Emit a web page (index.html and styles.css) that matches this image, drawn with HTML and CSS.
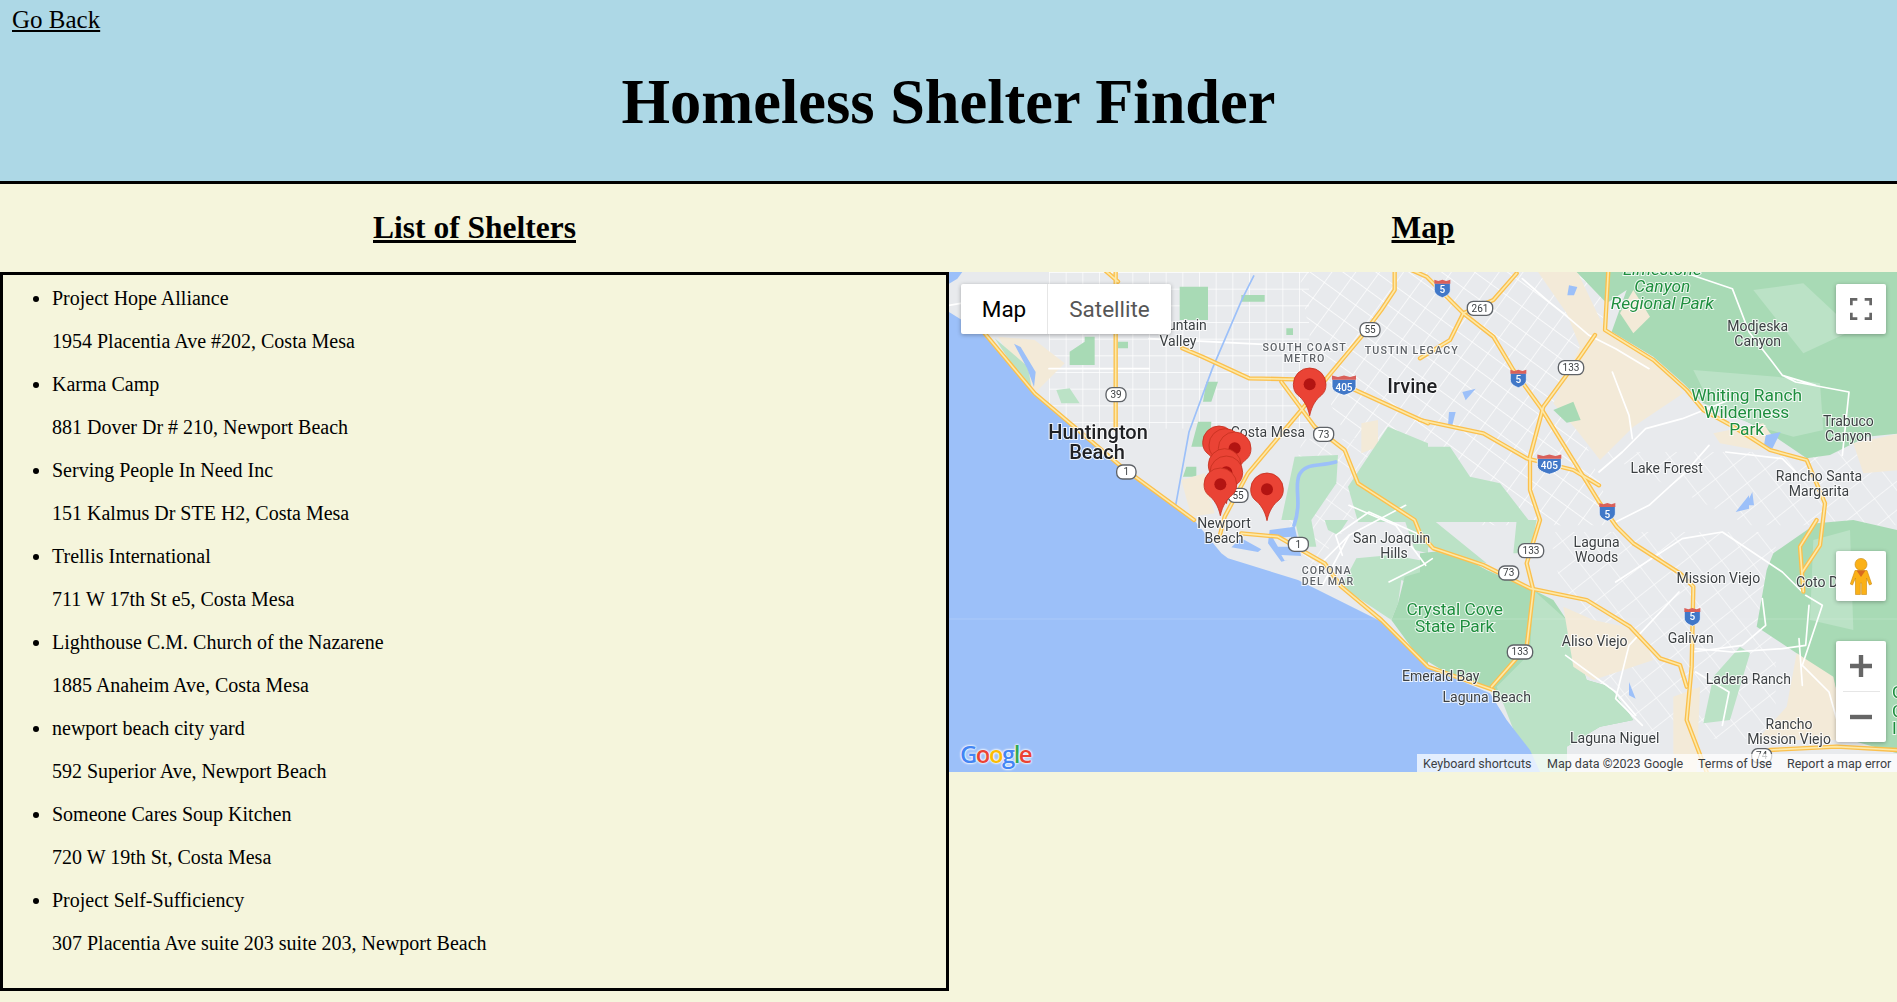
FILE: index.html
```html
<!DOCTYPE html>
<html lang="en">
<head>
<meta charset="utf-8">
<title>Homeless Shelter Finder</title>
<link rel="stylesheet" href="styles.css">
</head>
<body>
<header class="site-header">
  <a class="back-link" href="#">Go Back</a>
  <h1 class="title">Homeless Shelter Finder</h1>
</header>
<main class="columns">
  <section class="col">
    <h2 class="col-title">List of Shelters</h2>
    <div class="list-box">
      <ul class="shelters">
        <li><p>Project Hope Alliance</p><p>1954 Placentia Ave #202, Costa Mesa</p></li>
        <li><p>Karma Camp</p><p>881 Dover Dr # 210, Newport Beach</p></li>
        <li><p>Serving People In Need Inc</p><p>151 Kalmus Dr STE H2, Costa Mesa</p></li>
        <li><p>Trellis International</p><p>711 W 17th St e5, Costa Mesa</p></li>
        <li><p>Lighthouse C.M. Church of the Nazarene</p><p>1885 Anaheim Ave, Costa Mesa</p></li>
        <li><p>newport beach city yard</p><p>592 Superior Ave, Newport Beach</p></li>
        <li><p>Someone Cares Soup Kitchen</p><p>720 W 19th St, Costa Mesa</p></li>
        <li><p>Project Self-Sufficiency</p><p>307 Placentia Ave suite 203 suite 203, Newport Beach</p></li>
      </ul>
    </div>
  </section>
  <section class="col">
    <h2 class="col-title">Map</h2>
    <div class="map">
      <svg class="map-art" viewBox="0 0 2844 1500" aria-hidden="true">
        <defs>
          <pattern id="gridA" width="50" height="50" patternUnits="userSpaceOnUse"><path class="gridline" d="M0 0H50M0 0V50"/></pattern>
          <pattern id="gridB" width="58" height="58" patternUnits="userSpaceOnUse" patternTransform="rotate(36)"><path class="gridline" d="M0 0H58M0 0V58"/></pattern>
          <pattern id="gridC" width="68" height="68" patternUnits="userSpaceOnUse" patternTransform="rotate(-38)"><path class="gridline" d="M0 0H68M0 0V68"/></pattern>
          <g id="pin"><path class="pin-body" d="M0 0C-6-30-20-50-36-62C-45-70-49-80-49-94A49 49 0 1 1 49-94C49-80 45-70 36-62C20-50 6-30 0 0Z"/><circle class="pin-dot" cx="0" cy="-94" r="18"/></g>
          <g id="i-shield"><path class="i-blue" d="M-24-16H24V4C24 18 10 24 0 28C-10 24-24 18-24 4Z"/><path class="i-red" d="M-24-26L-12-22L0-26L12-22L24-26V-14H-24Z"/></g>
          <g id="fw">
            <path d="M700 229L760 254L900 319L1040 322M1197 344L1437 454"/>
            <path d="M1413 444L1603 484L1733 559L1873 594L1950 640"/>
            <path d="M1337-6V54L1297 114L1237 194L1137 314L1057 414L897 604L827 734L810 800"/>
            <path d="M997 329L1097 464L1187 534L1227 634L1397 744L1413 784L1453 829L1603 879L1743 949L1913 984L2043 1064L2133 1159L2193 1179L2213 1244"/>
            <path d="M107 184L257 364L517 584L735 744M877 784L987 794L1127 874L1177 944L1297 1044L1437 1184L1633 1254"/>
            <path d="M500-6V474M467-6L507 29"/>
            <path d="M1387-6L1433 14L1543 124L1633 194L1693 294L1773 404L1953 694L2003 764L2053 814L2193 904L2233 944L2228 1184L2213 1344L2273 1500"/>
            <path d="M1703 4L1633 84L1543 124L1503 204L1413 259"/>
            <path d="M1978-6L1968 174L2113 264L2213 354L2263 414L2353 464L2463 534L2573 564L2628 694L2613 820L2560 900"/>
            <path d="M1938 189L1893 254L1783 404L1743 554L1743 654L1773 744L1733 874L1753 954L1733 1124L1628 1244"/>
            <path d="M2603 744L2553 824L2563 959"/>
            <path d="M2463 1434L2663 1424L2844 1434"/>
          </g>
          <g id="streets">
            <path d="M0 100L230 60L500 70M300 290L600 290M600 200L1000 220M1200 700L1340 760L1430 880M1090 900L1200 790L1370 700"/>
            <path d="M1720 20L1800 90L1850 130M1850 130L1920 190L2000 230L2100 290M2230 10L2350 50L2400 180L2470 270L2500 310L2600 340M2500 310L2540 330L2700 360L2680 550M2350 380L2200 440L2090 470L2020 540L1950 600"/>
            <path d="M1990 300L2040 430L2050 500M2280 520L2210 600L2100 700L2000 750M2330 540L2500 560L2560 620"/>
            <path d="M2000 930L2200 800L2320 780L2500 900L2560 960M2440 980L2450 1060L2380 1120L2230 1140M2240 1130L2350 1140L2500 1130L2570 1120L2580 1000M2190 960L2040 1120L2000 1280L2080 1360M1850 1150L2000 1260L2060 1330M2560 1240L2550 1100M2240 1200L2340 1260L2320 1360M2570 970L2620 1000L2580 1120L2560 1180L2640 1260L2680 1400"/>
            <path d="M1180 850L1160 790L1260 720L1440 800M1200 790L1120 940M1320 930L1420 880L1450 860"/>
          </g>
        </defs>

        <!-- street grids -->
        <rect x="300" y="0" width="780" height="470" fill="url(#gridA)"/>
        <path d="M1050 0H2000L1880 430L2000 760H1560L1180 470L1100 300Z" fill="url(#gridB)"/>
        <path d="M1800 780H2480V1400H2100L1880 1150Z" fill="url(#gridC)" class="grid-faint"/>
        <path d="M1950 540H2844V760H2400Z" fill="url(#gridC)" class="grid-faint"/>
        <path d="M1060 500H1300L1250 700L1080 900L1000 760Z" fill="url(#gridB)" class="grid-faint"/>

        <!-- land tones -->
        <g transform="translate(1413,-6)">
          <path class="sand" d="M350 0H470L560 190L700 270L790 370L640 470L540 570L470 480L400 400L480 230L440 130Z"/>
          <path class="park-dark" d="M470 6H1440V490L1340 500L1230 555L1160 565L1050 490L950 440L850 400L790 340L700 260L575 185L620 60L560 100Z"/>
          <path class="park-soft" d="M820 300L1070 320L1200 340L1210 480L1120 500L1050 480L880 420Z"/>
          <path class="park-soft" d="M1000 60L1150 40L1300 180L1150 250Z"/>
          <path class="sand" d="M600 130L640 60L690 140L640 190Z"/>
          <path class="park" d="M0 530L90 530L150 620L240 640L330 756H0Z"/>
          <path class="park-dark" d="M400 420L460 395L482 450L440 458Z"/>
          <path class="sand" d="M880 490L1030 460L1070 520L1010 540L900 520Z"/>
          <path class="sand" d="M1300 520L1440 490V600L1330 610Z"/>
        </g>
        <g transform="translate(-3,-6)">
          <path class="sand" d="M150 200L260 210L350 280L260 370Z"/>
          <path class="park" d="M140 205L240 290L250 350L210 310Z"/>
          <path class="park-dark" d="M695 50H780V150H695ZM365 245L410 215V200H440V285H365ZM880 75H950V95H880ZM510 215H540V235H510ZM1015 175H1035V195H1015ZM750 455H790L785 530H730ZM775 335H810L790 395H765ZM715 590H745V620H705Z"/>
          <path class="sand" d="M700 630L770 610L800 730L730 740Z"/>
          <path class="sand" d="M1240 460L1290 450L1290 530L1240 550Z"/>
          <path class="park" d="M1040 560L1170 555L1165 640L1090 750H1000Z"/>
          <path class="park" d="M1200 650L1320 470L1440 520V756H1230Z"/>
          <path class="park" d="M325 360L365 355L395 400H340Z"/>
        </g>
        <g transform="translate(-3,744)">
          <path class="park" d="M1040 0H1090L1105 80L1060 80Z"/>
          <path class="park" d="M1130 0H1200L1170 45L1140 30Z"/>
          <path class="park" d="M1225 115L1330 105L1440 125V210L1360 180L1350 250L1330 300L1180 200Z"/>
          <path class="park-dark" d="M1330 300L1350 250L1370 170L1440 150V450Z"/>
          <path class="park" d="M1370 0H1440V100L1400 90Z"/>
        </g>
        <g transform="translate(1413,744)">
          <path class="park-dark" d="M0 100L90 90L200 150L340 210L400 240L440 300L500 480L570 500L640 600L540 620L440 680L440 756H350L260 560L210 510L100 470L0 410Z"/>
          <path class="park" d="M340 210L330 400L230 500L330 756H440L440 680L540 620L640 600L570 500L500 480L440 300Z"/>
          <path class="park" d="M0 0H40L200 130L60 100L0 70ZM290 0H350L330 100L280 100Z"/>
          <path class="park-dark" d="M1431 30L1300 0L1190 10L1060 100L1040 150L1010 320L1130 400L1240 480L1290 660L1431 700Z"/>
          <path class="park" d="M1180 60L1290 30L1300 330L1170 300Z"/>
          <path class="park" d="M880 470L960 380L990 400L930 600L850 610Z"/>
          <path class="sand" d="M430 260L520 300L660 330L700 420L520 480L460 440Z"/>
          <path class="sand" d="M760 530L840 500L830 756H760Z"/>
          <path class="sand" d="M1130 400L1240 470L1280 660H1010L1100 560Z"/>
        </g>
        <use href="#streets" class="street-set"/>

        <!-- water -->
        <path class="water" d="M0 120L105 185L260 370L515 585L735 744L817 844L837 859L1047 924L1187 994L1307 1054L1437 1184L1623 1264L1673 1344L1743 1434L1773 1500H0Z"/>
        <path class="water" d="M0 0H40L25 20L0 35Z"/>
        <path class="water" d="M195 215L215 225L260 300L255 345L235 290Z"/>
        <g transform="translate(-3,744)">
          <path class="water" d="M880 55L940 88L930 96L850 82ZM965 30L1040 20L1060 110L1000 125L960 70Z"/>
          <path class="land-light" d="M975 55L1030 50L1020 80L990 80ZM1000 105L1060 108L1060 122L1010 122Z"/>
        </g>
        <path class="water" d="M1860 40L1885 45L1875 70L1855 70ZM1540 360L1580 350L1550 385ZM1500 420H1520L1510 460H1497Z"/>
        <path class="bay" d="M1160 570C1110 585 1070 570 1050 610C1035 650 1060 690 1035 760"/>
        <path class="water" d="M2450 490L2495 480L2470 530L2445 520ZM2390 700L2410 660L2415 700ZM2040 1230L2060 1280L2040 1270ZM2360 720L2400 670L2400 710Z"/>
        <path class="river" d="M915 10L880 80L790 290L720 480L680 700"/>
        <path class="seam" d="M0 1041H2844"/>

        <!-- freeways -->
        <use href="#fw" class="fw-casing"/>
        <use href="#fw" class="fw-inner"/>

        <!-- labels -->
        <g transform="translate(-3,-6)">
          <text class="lbl" x="660" y="181">untain</text>
          <text class="lbl mid" x="690" y="228">Valley</text>
          <text class="lbl small mid" x="1070" y="242">SOUTH COAST</text>
          <text class="lbl small mid" x="1070" y="276">METRO</text>
          <text class="lbl small" x="1250" y="252">TUSTIN LEGACY</text>
          <text class="lbl big" x="1318" y="370">Irvine</text>
          <text class="lbl" x="848" y="500">Costa Mesa</text>
          <text class="lbl big mid" x="450" y="508">Huntington</text>
          <text class="lbl big mid" x="447" y="568">Beach</text>
        </g>
        <g transform="translate(-3,744)">
          <text class="lbl mid" x="828" y="25">Newport</text>
          <text class="lbl mid" x="828" y="70">Beach</text>
          <text class="lbl" x="1215" y="70">San Joaquin</text>
          <text class="lbl mid" x="1338" y="113">Hills</text>
          <text class="lbl small mid" x="1136" y="163">CORONA</text>
          <text class="lbl small mid" x="1140" y="196">DEL MAR</text>
          <text class="lbl green mid" x="1520" y="285">Crystal Cove</text>
          <text class="lbl green mid" x="1520" y="337">State Park</text>
          <text class="lbl" x="1362" y="483">Emerald Bay</text>
        </g>
        <g transform="translate(1413,-6)">
          <text class="lbl green ital mid" x="727" y="15">Limestone</text>
          <text class="lbl green ital mid" x="727" y="65">Canyon</text>
          <text class="lbl green ital mid" x="727" y="118">Regional Park</text>
          <text class="lbl mid" x="1013" y="182">Modjeska</text>
          <text class="lbl mid" x="1013" y="228">Canyon</text>
          <text class="lbl green mid" x="980" y="392">Whiting Ranch</text>
          <text class="lbl green mid" x="980" y="443">Wilderness</text>
          <text class="lbl green mid" x="980" y="495">Park</text>
          <text class="lbl mid" x="1285" y="468">Trabuco</text>
          <text class="lbl mid" x="1285" y="512">Canyon</text>
          <text class="lbl mid" x="740" y="608">Lake Forest</text>
          <text class="lbl mid" x="1197" y="632">Rancho Santa</text>
          <text class="lbl mid" x="1197" y="678">Margarita</text>
        </g>
        <g transform="translate(1413,744)">
          <text class="lbl mid" x="200" y="545">Laguna Beach</text>
          <text class="lbl mid" x="530" y="80">Laguna</text>
          <text class="lbl mid" x="530" y="125">Woods</text>
          <text class="lbl mid" x="895" y="190">Mission Viejo</text>
          <text class="lbl mid" x="812" y="370">Galivan</text>
          <text class="lbl mid" x="524" y="377">Aliso Viejo</text>
          <text class="lbl mid" x="985" y="493">Ladera Ranch</text>
          <text class="lbl mid" x="1107" y="628">Rancho</text>
          <text class="lbl mid" x="1107" y="673">Mission Viejo</text>
          <text class="lbl mid" x="584" y="670">Laguna Niguel</text>
          <text class="lbl" x="1128" y="200">Coto D</text>
          <text class="lbl green" x="1416" y="535">Or</text>
          <text class="lbl green" x="1416" y="590">Ca</text>
          <text class="lbl green" x="1416" y="642">Ild</text>
        </g>

        <!-- highway shields -->
        <g transform="translate(-3,-6)">
          <rect class="shield" x="1236" y="158" width="60" height="42" rx="18"/><text class="shield-t" x="1266" y="189">55</text>
          <rect class="shield" x="474" y="353" width="60" height="42" rx="18"/><text class="shield-t" x="504" y="384">39</text>
          <rect class="shield" x="1097" y="472" width="60" height="42" rx="18"/><text class="shield-t" x="1127" y="503">73</text>
          <rect class="shield" x="506" y="585" width="58" height="42" rx="18"/><text class="shield-t" x="535" y="616">1</text>
          <rect class="shield" x="840" y="655" width="60" height="42" rx="18"/><text class="shield-t" x="870" y="687">55</text>
          <g transform="translate(1188,345) scale(1.5,1.1)"><use href="#i-shield"/></g><text class="i-t" x="1188" y="362">405</text>
        </g>
        <g transform="translate(-3,744)">
          <rect class="shield" x="1021" y="52" width="60" height="42" rx="18"/><text class="shield-t" x="1051" y="84">1</text>
        </g>
        <g transform="translate(1413,-6)">
          <rect class="shield" x="142" y="94" width="76" height="42" rx="18"/><text class="shield-t" x="180" y="126">261</text>
          <rect class="shield" x="415" y="272" width="76" height="42" rx="18"/><text class="shield-t" x="453" y="304">133</text>
          <g transform="translate(67,55)"><use href="#i-shield"/></g><text class="i-t" x="67" y="70">5</text>
          <g transform="translate(295,325)"><use href="#i-shield"/></g><text class="i-t" x="295" y="340">5</text>
          <g transform="translate(562,725)"><use href="#i-shield"/></g><text class="i-t" x="562" y="745">5</text>
          <g transform="translate(388,582) scale(1.5,1.1)"><use href="#i-shield"/></g><text class="i-t" x="388" y="597">405</text>
        </g>
        <g transform="translate(1413,744)">
          <rect class="shield" x="295" y="71" width="76" height="42" rx="18"/><text class="shield-t" x="333" y="103">133</text>
          <rect class="shield" x="236" y="138" width="60" height="42" rx="18"/><text class="shield-t" x="266" y="169">73</text>
          <rect class="shield" x="262" y="375" width="76" height="42" rx="18"/><text class="shield-t" x="300" y="406">133</text>
          <g transform="translate(817,290)"><use href="#i-shield"/></g><text class="i-t" x="817" y="301">5</text>
          <rect class="shield" x="995" y="686" width="60" height="42" rx="18"/><text class="shield-t" x="1025" y="716">74</text>
        </g>

        <!-- pins -->
        <g transform="translate(-3,-6)">
          <use href="#pin" x="1085" y="437"/>
          <use href="#pin" x="813" y="611"/>
          <use href="#pin" x="832" y="619"/>
          <use href="#pin" x="860" y="629"/>
          <use href="#pin" x="830" y="679"/>
          <use href="#pin" x="835" y="701"/>
          <use href="#pin" x="817" y="737"/>
          <use href="#pin" x="957" y="752"/>
        </g>
      </svg>

      <div class="map-type">
        <span class="type-btn type-on">Map</span>
        <span class="type-btn">Satellite</span>
      </div>
      <button class="ctl ctl-full" aria-label="Fullscreen">
        <svg viewBox="0 0 18 18" class="ctl-icon"><path class="ctl-stroke" d="M1 6V1H6M12 1H17V6M17 12V17H12M6 17H1V12"/></svg>
      </button>
      <button class="ctl ctl-peg" aria-label="Street View">
        <svg viewBox="0 0 22 37" class="peg-icon">
          <circle class="peg-fill" cx="11" cy="6.4" r="6"/>
          <path class="peg-fill" d="M5 12.5H17L21.7 26L19.5 27L16.5 20V36.5H11.6V25H10.4V36.5H5.5V20L2.5 27L.3 26Z"/>
          <path class="peg-collar" d="M6.5 12.5H15.5L11 19Z"/>
        </svg>
      </button>
      <div class="zoom-ctl">
        <button class="zoom-btn" aria-label="Zoom in"><svg viewBox="0 0 18 18" class="ctl-icon"><path class="zoom-stroke" d="M0 9H18M9 0V18"/></svg></button>
        <span class="zoom-sep"></span>
        <button class="zoom-btn" aria-label="Zoom out"><svg viewBox="0 0 18 18" class="ctl-icon"><path class="zoom-stroke" d="M0 9H18"/></svg></button>
      </div>
      <div class="g-logo"><span class="g-b">G</span><span class="g-r">o</span><span class="g-y">o</span><span class="g-b">g</span><span class="g-g">l</span><span class="g-r">e</span></div>
      <div class="attrib">
        <span class="attr-kb">Keyboard shortcuts</span>
        <span class="attr-data">Map data ©2023 Google</span>
        <span class="attr-terms">Terms of Use</span>
        <span class="attr-report">Report a map error</span>
      </div>
    </div>
  </section>
</main>
</body>
</html>
```
FILE: styles.css
```css
* { box-sizing: border-box; }
html, body { margin: 0; }
body {
  background: #f5f5dc;
  color: #000;
  font-family: "Liberation Serif", "Times New Roman", serif;
  height: 1002px;
  overflow: hidden;
}
.site-header {
  background: #add8e6;
  border-bottom: 3px solid #000;
  height: 184px;
  padding: 6px 0 0 12px;
}
.back-link {
  display: block;
  width: max-content;
  color: #000;
  font-size: 25px;
}
.title {
  margin: 32px 0 0 -12px;
  text-align: center;
  font-size: 62.4px;
  font-weight: bold;
}
.columns {
  display: grid;
  grid-template-columns: 949px 948px;
}
.col-title {
  margin: 25px 0 26px;
  text-align: center;
  font-size: 31.5px;
  font-weight: bold;
  text-decoration: underline;
  line-height: 37px;
}
.list-box {
  border: 3px solid #000;
  height: 719px;
  font-size: 20px;
}
.shelters {
  margin: 0;
  padding: 12px 0 0 49px;
}
.shelters p { margin: 0 0 20px; }

/* map */
.map {
  position: relative;
  width: 948px;
  height: 500px;
  background: #e8eaed;
  overflow: hidden;
  font-family: Roboto, "Liberation Sans", sans-serif;
}
.map-art { display: block; width: 948px; height: 500px; filter: blur(0.4px); }
.land-light { fill: #e8eaed; }
.sand { fill: #f3ead8; }
.park { fill: #bbe2c6; }
.park-dark { fill: #a8dab5; }
.park-soft { fill: #bbe2c6; }
.water { fill: #9cc0f9; }
.river { fill: none; stroke: #9cc0f9; stroke-width: 5; }
.bay { fill: none; stroke: #9cc0f9; stroke-width: 11; stroke-linecap: round; }
.seam { stroke: #fff; stroke-opacity: .25; stroke-width: 2; fill: none; }
.gridline { fill: none; stroke: #fff; stroke-width: 4; }
.grid-faint { opacity: .8; }
.street-set { fill: none; stroke: #fff; stroke-width: 5; stroke-linejoin: round; stroke-linecap: round; }
.fw-casing { fill: none; stroke: #fbc04d; stroke-width: 13; stroke-linejoin: round; stroke-linecap: round; }
.fw-inner { fill: none; stroke: #fde9a8; stroke-width: 5; stroke-linejoin: round; stroke-linecap: round; }
.lbl {
  font-family: Roboto, "Liberation Sans", sans-serif;
  font-size: 42px;
  fill: #3c4043;
  paint-order: stroke;
  stroke: #fff;
  stroke-opacity: .8;
  stroke-width: 6px;
}
.big { font-size: 60px; font-weight: 500; fill: #202124; }
.small { font-size: 32px; font-weight: 500; letter-spacing: 3.5px; fill: #5f6368; }
.green { font-size: 52px; fill: #1e8e3e; }
.ital { font-style: italic; }
.mid { text-anchor: middle; }
.shield { fill: #fff; stroke: #5f6368; stroke-width: 4; }
.shield-t {
  font-family: Roboto, "Liberation Sans", sans-serif;
  font-size: 30px;
  fill: #3c4043;
  text-anchor: middle;
}
.i-blue { fill: #4178c8; stroke: #fff; stroke-width: 2; }
.i-red { fill: #d9605a; }
.i-t {
  font-family: Roboto, "Liberation Sans", sans-serif;
  font-size: 30px;
  font-weight: 500;
  fill: #fff;
  text-anchor: middle;
}
.pin-body { fill: #ea4335; stroke: #c5301f; stroke-width: 2.5; }
.pin-dot { fill: #b31412; }

/* controls */
.map-type {
  position: absolute;
  left: 12px;
  top: 12px;
  display: flex;
  height: 50px;
  background: #fff;
  border-radius: 2px;
  box-shadow: 0 1px 4px rgba(0, 0, 0, .3);
  font-size: 22.5px;
}
.type-btn {
  display: flex;
  align-items: center;
  justify-content: center;
  width: 123px;
  color: #565656;
}
.type-on {
  width: 87px;
  color: #000;
  border-right: 1px solid #e6e6e6;
}
.ctl, .zoom-ctl {
  position: absolute;
  right: 11px;
  width: 50px;
  background: #fff;
  border: 0;
  border-radius: 2px;
  padding: 0;
  box-shadow: 0 1px 4px rgba(0, 0, 0, .3);
}
.ctl {
  height: 50px;
  display: flex;
  align-items: center;
  justify-content: center;
}
.ctl-full { top: 12px; }
.ctl-peg { top: 279px; }
.ctl-icon { width: 22px; height: 22px; display: block; }
.ctl-stroke { fill: none; stroke: #666; stroke-width: 2.4; }
.peg-icon { width: 22px; height: 37px; display: block; }
.peg-fill { fill: #fbb117; stroke: #c98a12; stroke-width: .6; }
.peg-collar { fill: #d86a20; }
.zoom-ctl { top: 369px; height: 101px; display: flex; flex-direction: column; align-items: center; }
.zoom-btn {
  flex: 1;
  width: 50px;
  background: none;
  border: 0;
  padding: 0;
  display: flex;
  align-items: center;
  justify-content: center;
}
.zoom-sep { width: 37px; height: 1px; background: #e6e6e6; }
.zoom-stroke { fill: none; stroke: #666; stroke-width: 3.6; }
.g-logo {
  position: absolute;
  left: 11px;
  bottom: 3px;
  display: flex;
  font-family: "Open Sans", sans-serif;
  font-size: 24px;
  font-weight: 600;
  line-height: 30px;
  letter-spacing: -1.6px;
  text-shadow: 0 0 2px #fff, 0 0 2px #fff, 0 0 3px #fff;
}
.g-b { color: #4285f4; }
.g-r { color: #ea4335; }
.g-y { color: #fbbc05; }
.g-g { color: #34a853; }
.attrib {
  position: absolute;
  right: 0;
  bottom: 0;
  width: 480px;
  height: 18px;
  display: flex;
  align-items: center;
  padding-left: 6px;
  background: rgba(255, 255, 255, .72);
  font-size: 12.5px;
  color: #3c4043;
  white-space: nowrap;
}
.attrib span { flex: none; }
.attr-kb { width: 124px; }
.attr-data { width: 151px; }
.attr-terms { width: 89px; }
```
